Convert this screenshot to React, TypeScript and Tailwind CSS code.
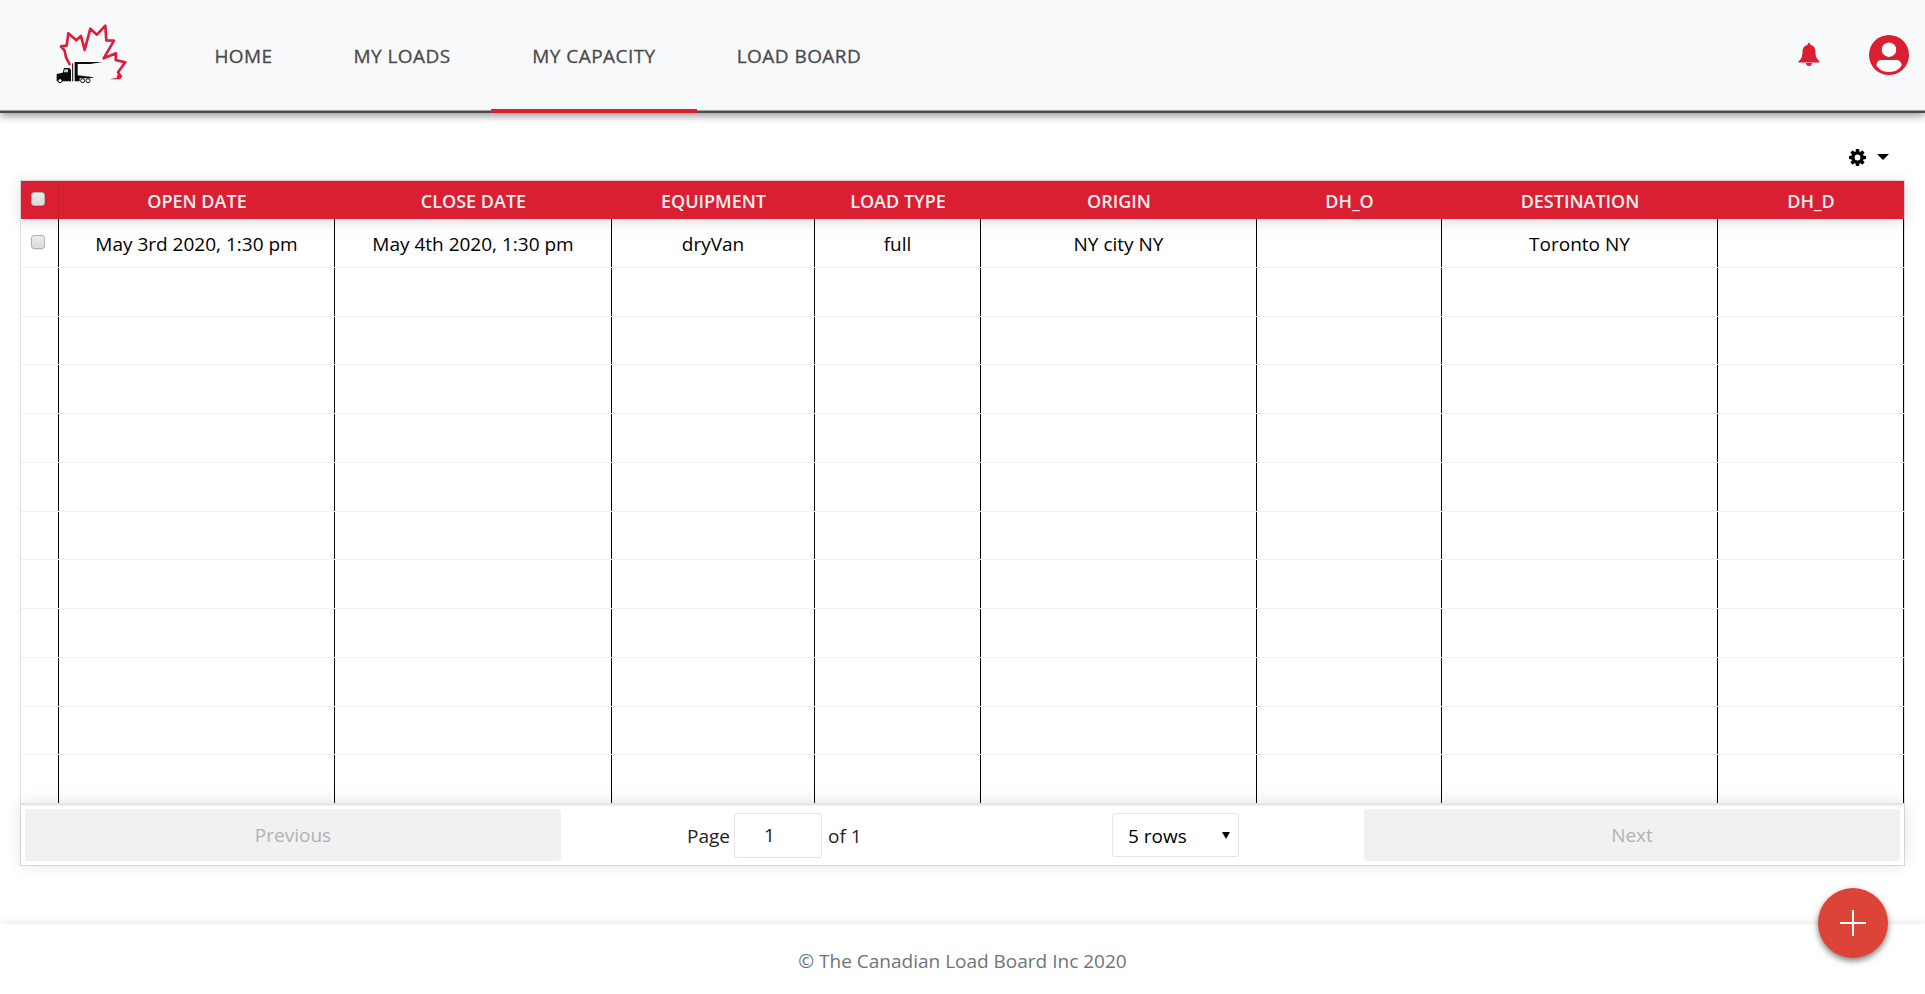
import React from "react";

type Row = string[];

const COLUMNS = ["OPEN DATE", "CLOSE DATE", "EQUIPMENT", "LOAD TYPE", "ORIGIN", "DH_O", "DESTINATION", "DH_D"];

const ROWS: Row[] = [
  ["May 3rd 2020, 1:30 pm", "May 4th 2020, 1:30 pm", "dryVan", "full", "NY city NY", "", "Toronto NY", ""],
  ...Array.from({ length: 11 }, () => Array(8).fill("") as Row),
];

const GRID = "grid grid-cols-[38px_276px_277px_203px_166px_276px_185px_276px_186px]";

function Logo() {
  return (
    <svg width="100" height="90" viewBox="0 0 300 270" fill="none">
      <path
        d="M90 165 L78 142 L74 122 L63 109 L80 107 L85 70 L109 91 L123 78 L134 120 L151 56 L171 74 L196 47 L199 91 L222 92 L191 145 L228 130 L227 150 L256 157 L234 187 L243 200"
        stroke="#dc1f3c"
        strokeWidth="8"
        strokeLinejoin="round"
      />
      <path d="M232 194 L248 199 L240 208 L209 208 L230 203Z" fill="#dc1f3c" />
      <path d="M50 192 L68 188 L72 174 H88 L93 180 V214 H50Z" fill="#0b0b0b" />
      <path d="M74 178 H84 V187 H71Z" fill="#c9cbcd" />
      <path d="M98 214 V160" stroke="#0b0b0b" strokeWidth="3" />
      <path d="M104 156 L188 156 L150 162 H113 V196 L162 202 L150 205 H119 V214 H104Z" fill="#0b0b0b" />
      <circle cx="60" cy="212" r="6" fill="#f8f9fb" stroke="#0b0b0b" strokeWidth="3" />
      <circle cx="128" cy="212" r="6" fill="#f8f9fb" stroke="#0b0b0b" strokeWidth="3" />
      <circle cx="144" cy="212" r="6" fill="#f8f9fb" stroke="#0b0b0b" strokeWidth="3" />
    </svg>
  );
}

function NavItem({ label, width, active }: { label: string; width: string; active?: boolean }) {
  return (
    <a className={`relative flex h-[113px] items-center justify-center pb-px tracking-[0.45px] text-[#4a4a4a] [-webkit-text-stroke:0.3px_#4a4a4a] ${width}`}>
      {label}
      {active && <span className="absolute inset-x-0 bottom-0 h-1 bg-[#db1f33]" />}
    </a>
  );
}

function Checkbox() {
  return (
    <span className="mb-[2px] ml-[10px] block h-[14px] w-[14px] rounded-[3px] border border-[#b0b0b0] bg-linear-to-b from-[#ececec] to-[#dadada] shadow-[0_1px_0_rgba(0,0,0,0.08)]" />
  );
}

export default function App() {
  return (
    <div className="flex h-[994px] w-full flex-col overflow-hidden bg-white font-['Open_Sans',sans-serif] text-[19px] text-black">
      <header className="relative flex h-[113px] shrink-0 items-stretch border-b-2 border-[#4b4c4e] bg-[#f8f9fb] shadow-[inset_0_-1px_0_#a0a1a2,0_3px_8px_rgba(0,0,0,0.4)]">
        <div className="w-[174px] pt-[10px] pl-10">
          <Logo />
        </div>
        <nav className="flex">
          <NavItem label="HOME" width="w-[139px]" />
          <NavItem label="MY LOADS" width="w-[178px]" />
          <NavItem label="MY CAPACITY" width="w-[206px]" active />
          <NavItem label="LOAD BOARD" width="w-[204px]" />
        </nav>
        <div className="ml-auto flex items-center gap-[49px] pr-4 pb-px">
          <svg width="22" height="24" viewBox="0 0 22 24" className="mb-px" fill="#db1f33">
            <path d="M11 0c1 0 1.500.600 1.500 1.500v.600c3.300.700 5 3.300 5 6.500 0 5.400 1.500 7.700 4 9.900v1H.500v-1c2.500-2.200 4-4.500 4-9.900 0-3.200 1.700-5.800 5-6.500v-.600C9.500.600 10 0 11 0Z" />
            <path d="M8 20h6a3 3 0 0 1-6 0Z" />
          </svg>
          <svg width="40" height="40" viewBox="0 0 40 40">
            <circle cx="20" cy="20" r="20" fill="#db1f33" />
            <circle cx="20" cy="14.700" r="7.200" fill="#fff" />
            <path d="M13 25h14c3.500 0 5.500 2 5.500 5.300C30.500 34.500 26 37 20 37S9.500 34.500 7.500 30.300C7.500 27 9.500 25 13 25Z" fill="#fff" />
          </svg>
        </div>
      </header>

      <div className="flex h-[67px] shrink-0 items-end justify-end gap-[11px] pr-9 pb-[14px]">
        <svg width="17" height="17" viewBox="0 0 17 17">
          <g fill="#000">
            <circle cx="8.500" cy="8.500" r="6.300" />
            {[0, 45, 90, 135].map((a) => (
              <rect key={a} x="6.700" y="0" width="3.600" height="17" rx="0.800" transform={`rotate(${a} 8.5 8.5)`} />
            ))}
          </g>
          <circle cx="8.500" cy="8.500" r="2.900" fill="#fff" />
        </svg>
        <svg width="12" height="6" viewBox="0 0 12 6" className="mb-[6px]">
          <path d="M0 0h12L6 6Z" fill="#000" />
        </svg>
      </div>

      <main className="mx-5 flex h-[686px] shrink-0 flex-col border border-[#dfdfdf]">
        <div className={`${GRID} relative h-[38px] shrink-0 items-center bg-[#db1f33] text-[18px] font-semibold text-[#f8f0f0] shadow-[0_2px_15px_rgba(0,0,0,0.15)]`}>
          <div className="flex h-full items-center border-r border-[#c81d30]">
            <Checkbox />
          </div>
          {COLUMNS.map((c) => (
            <div key={c} className="pt-[2px] text-center">
              {c}
            </div>
          ))}
        </div>
        <div className="flex h-[584px] shrink-0 flex-col">
          {ROWS.map((row, i) => (
            <div key={i} className={`${GRID} flex-1 border-b border-[#f2f2f2] last:border-b-0`}>
              <div className="flex items-center border-r border-black">{i === 0 && <Checkbox />}</div>
              {row.map((cell, j) => (
                <div key={j} className="flex items-center justify-center border-r border-black pt-[3px]">
                  {cell}
                </div>
              ))}
            </div>
          ))}
        </div>
        <div className="relative flex flex-1 items-center border-t-2 border-[#e5e5e5] bg-white px-1 shadow-[inset_0_1px_0_#f1f1f1,0_0_15px_rgba(0,0,0,0.12)]">
          <button className="h-[52px] w-[536px] shrink-0 rounded-[3px] bg-[#f1f1f1] pt-px text-[#b3b3b3]">Previous</button>
          <div className="ml-[126px] flex w-[425px] items-center pt-px text-[#222]">
            <span className="w-[47px] pt-[2px]">Page</span>
            <span className="flex h-[45px] w-[88px] items-center rounded-[3px] border border-[#e5e5e5] pl-[29px]">1</span>
            <span className="ml-[6px] pt-[2px]">of 1</span>
          </div>
          <div className="flex h-11 w-[127px] items-center justify-between rounded-[3px] border border-[#e5e5e5] pr-[8px] pl-[15px]">
            <span className="pt-[3px]">5 rows</span>
            <svg width="8" height="7" viewBox="0 0 8 7">
              <path d="M0 0h8L4 7Z" fill="#000" />
            </svg>
          </div>
          <button className="ml-auto h-[52px] w-[536px] shrink-0 rounded-[3px] bg-[#f1f1f1] pt-px text-[#b3b3b3]">Next</button>
        </div>
      </main>

      <footer className="relative mt-auto flex h-[70px] shrink-0 items-center justify-center bg-white pt-[5px] text-[#6c757d] shadow-[0_0_10px_rgba(0,0,0,0.12)]">
        © The Canadian Load Board Inc 2020
      </footer>

      <button className="fixed right-[37px] bottom-9 flex h-[70px] w-[70px] items-center justify-center rounded-full bg-[#db4437] shadow-[0_3px_6px_rgba(0,0,0,0.5)]">
        <svg width="26" height="26" viewBox="0 0 26 26">
          <path d="M13 0V26M0 13H26" stroke="#fff" strokeWidth="2" />
        </svg>
      </button>
    </div>
  );
}
